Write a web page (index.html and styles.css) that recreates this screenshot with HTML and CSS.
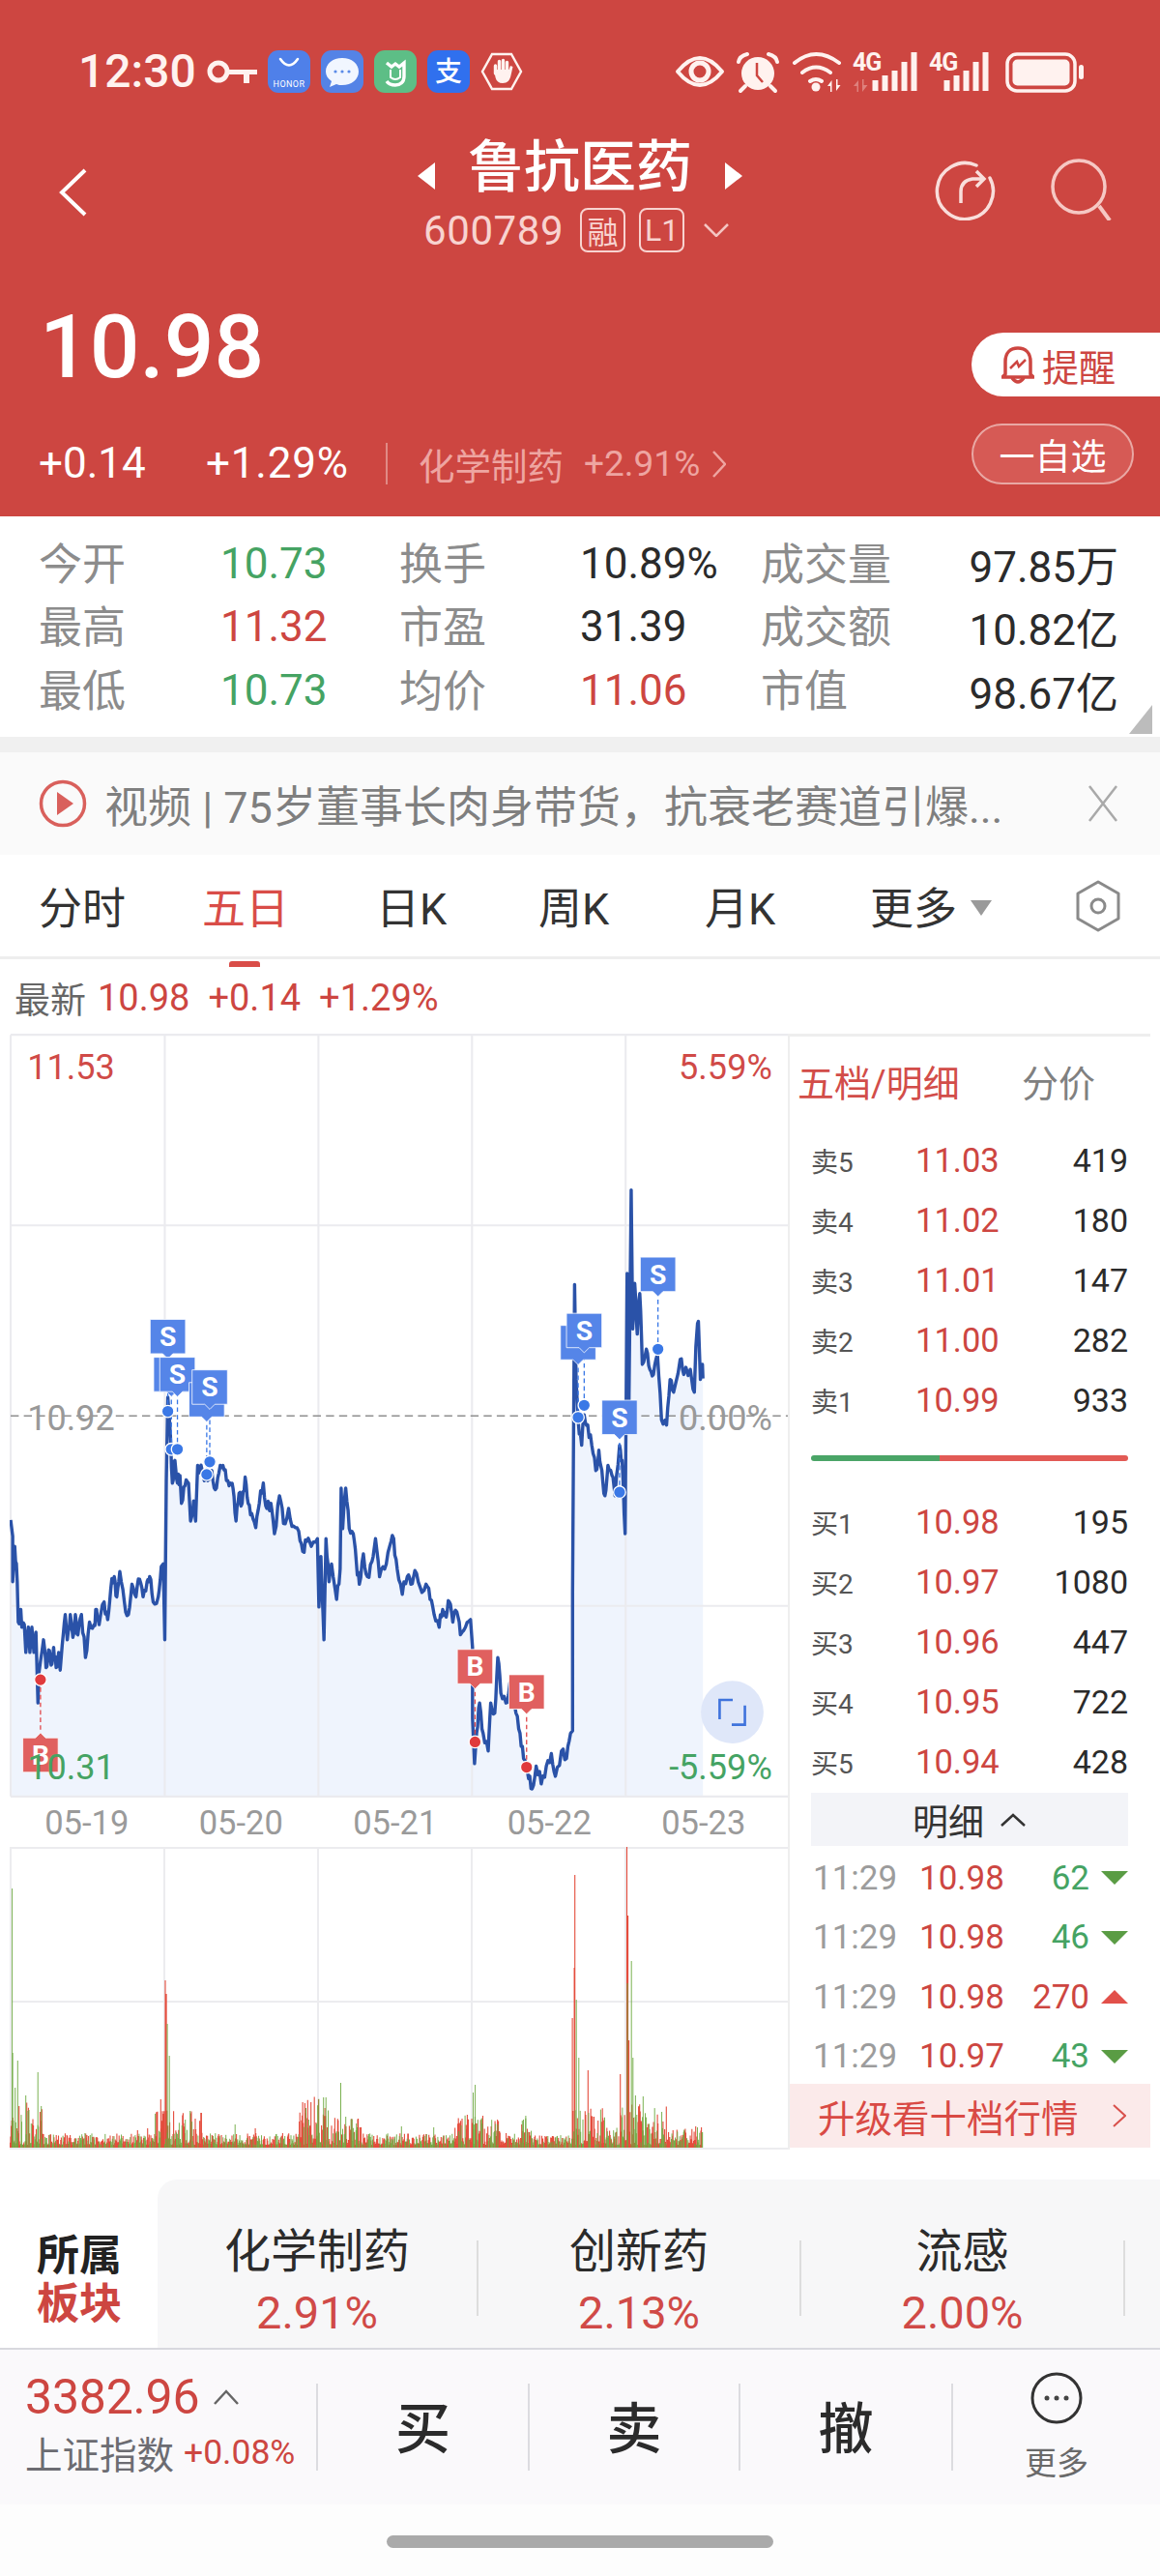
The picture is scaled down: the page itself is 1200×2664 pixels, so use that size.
FILE: index.html
```html
<!DOCTYPE html>
<html lang="zh-CN">
<head>
<meta charset="utf-8">
<title>鲁抗医药</title>
<link rel="stylesheet" href="styles.css">
</head>
<body>
<div class="page">
  <header class="header">
    <div class="status">
      <span class="time">12:30</span>
      <svg class="key" viewBox="0 0 52 26"><circle cx="12" cy="13" r="9" fill="none" stroke="#fff2ef" stroke-width="5"/><path d="M21 11h31v5h-8v9h-6v-9H21z" fill="#fff2ef"/></svg>
      <svg class="app" viewBox="0 0 44 44"><rect width="44" height="44" rx="11" fill="#4f80e9"/><path d="M13 9q9 13 18 0" fill="none" stroke="#fff" stroke-width="2.6" stroke-linecap="round"/><text x="22" y="38" class="honor">HONOR</text></svg>
      <svg class="app" viewBox="0 0 44 44"><rect width="44" height="44" rx="11" fill="#5483e6"/><path d="M22 8c10 0 17 6 17 14s-7 14-17 14c-2 0-4 0-6-1l-7 3 2-6c-4-3-6-6-6-10C5 14 12 8 22 8z" fill="#f1f6ff"/><circle cx="15" cy="22" r="1.6" fill="#5b8be8"/><circle cx="22" cy="22" r="1.6" fill="#5b8be8"/><circle cx="29" cy="22" r="1.6" fill="#5b8be8"/></svg>
      <svg class="app" viewBox="0 0 44 44"><rect width="44" height="44" rx="11" fill="#5dbe86"/><path d="M13 13l5 4 4-3 4 3 5-4v14c0 6-4 9-9 9-4 0-7-1-9-4" fill="none" stroke="#fff" stroke-width="3.4"/><path d="M17 20v8q5 4 10 0v-8" fill="none" stroke="#fff" stroke-width="2"/></svg>
      <svg class="app" viewBox="0 0 44 44"><rect width="44" height="44" rx="11" fill="#3070ee"/><text x="22" y="32" class="ali">支</text></svg>
      <svg class="app" viewBox="0 0 44 44"><path d="M12 4h20l10 18-10 18H12L2 22z" fill="none" stroke="#fff2ef" stroke-width="2.4"/><path d="M15.500 24v-8M19.500 24V11.500M23.500 24V10.500M27.500 24V12.500" fill="none" stroke="#fff2ef" stroke-width="3.400" stroke-linecap="round"/><path d="M14 20h15.500l1.500-4 2.500 1-2 9c-1 5-3.500 8-8.500 8-4 0-6.500-2-7.500-6z" fill="#fff2ef"/></svg>
      <svg class="sys" viewBox="700 50 425 46">
        <path d="M703 73q23-28 46 0q-23 28-46 0z" fill="none" stroke="#fff2ef" stroke-width="4" stroke-linejoin="round"/>
        <circle cx="726" cy="73" r="9" fill="none" stroke="#fff2ef" stroke-width="5"/>
        <circle cx="786" cy="75" r="17" fill="#fff2ef"/>
        <path d="M785 64v13l6 7" fill="none" stroke="#cd4641" stroke-width="2.500"/>
        <path d="M766 63q1-6 9-8M806 63q-1-6-9-8" fill="none" stroke="#fff2ef" stroke-width="4" stroke-linecap="round"/>
        <path d="M773 88l-5 5M799 88l5 5" stroke="#fff2ef" stroke-width="4" stroke-linecap="round"/>
        <path d="M824 64q22-18 46 0M832 74q14-11 29 0M840 83q6-4 12 0" fill="none" stroke="#fff2ef" stroke-width="4" stroke-linecap="round"/>
        <circle cx="846" cy="89" r="4.500" fill="#fff2ef"/>
        <path d="M858 88l4.500-6v12h-1.500v-6zM867 81h1.500v6h3l-4.500 6z" fill="#fff2ef"/>
        <text x="884" y="72" class="net">4G</text>
        <path d="M885 88l5-6v12h-1.500v-6zM894 81h1.500v6h4l-5.500 7z" fill="#fff2ef" opacity=".35"/>
        <path d="M904.500 82h6v11h-6zM914.500 77h6v16h-6zM924.500 72h6v21h-6zM934.500 63h6v30h-6zM944.500 53h6v40h-6z" fill="#fff2ef"/>
        <text x="963" y="72" class="net">4G</text>
        <path d="M978.500 82h6v11h-6zM988.500 77h6v16h-6zM998.500 72h6v21h-6zM1008.500 63h6v30h-6zM1018.500 53h6v40h-6z" fill="#fff2ef"/>
        <rect x="1044" y="55" width="70" height="38" rx="10" fill="none" stroke="#fff2ef" stroke-width="3.500"/>
        <rect x="1049.500" y="60.500" width="59" height="27" rx="5" fill="#fff2ef"/>
        <rect x="1118" y="66" width="5" height="15" rx="2.500" fill="#fff2ef"/>
      </svg>
    </div>
    <div class="nav">
      <svg class="back" viewBox="0 0 32 50"><path d="M28 2L4 25l24 23" fill="none" stroke="#fff" stroke-width="4"/></svg>
      <div class="nav-center">
        <div class="title-row">
          <svg class="arrow" viewBox="0 0 20 28"><path d="M20 0v28L2 14z" fill="#fff"/></svg>
          <h1 class="title">鲁抗医药</h1>
          <svg class="arrow" viewBox="0 0 20 28"><path d="M0 0v28l18-14z" fill="#fff"/></svg>
        </div>
        <div class="sub-row">
          <span class="code">600789</span>
          <span class="tag">融</span>
          <span class="tag">L1</span>
          <svg class="caret" viewBox="0 0 26 14"><path d="M1 1l12 12L25 1" fill="none" stroke="#f4c5c2" stroke-width="2.500"/></svg>
        </div>
      </div>
      <div class="nav-tools">
        <svg class="tool" viewBox="0 0 64 64"><path d="M44 7A29 29 0 1 0 58 20" fill="none" stroke="#f9dedb" stroke-width="3.500" stroke-linecap="round"/><path d="M28 46V34q0-11 12-13h11M44 13l8 8-8 8" fill="none" stroke="#f9dedb" stroke-width="3.500"/></svg>
        <svg class="tool" viewBox="0 0 64 64"><circle cx="30" cy="29" r="27" fill="none" stroke="#f6c8c4" stroke-width="3.500"/><path d="M51 49l11 15" fill="none" stroke="#f6c8c4" stroke-width="4"/></svg>
      </div>
    </div>
    <div class="quote">
      <div class="price">10.98</div>
      <div class="remind">
        <svg class="bell" viewBox="0 0 34 40"><path d="M4 30V17C4 8 9 3 17 3s13 5 13 14v13l3 3H1zM11 34q6 8 12 0" fill="none" stroke="#cd4641" stroke-width="3.500" stroke-linejoin="round"/><path d="M9 24l7-7 2 5 7-7" fill="none" stroke="#cd4641" stroke-width="2.500"/></svg>
        <span>提醒</span>
      </div>
    </div>
    <div class="info">
      <span class="chg chg-a">+0.14</span>
      <span class="chg chg-b">+1.29%</span>
      <span class="sector-link"><b>化学制药</b><i>+2.91%</i><svg class="link-chev" viewBox="0 0 14 28"><path d="M1 1l12 13L1 27" fill="none" stroke="#eea5a1" stroke-width="2.500"/></svg></span>
      <span class="watch">一自选</span>
    </div>
  </header>

  <section class="stats">
    <span class="lbl">今开</span><span class="green">10.73</span><span class="lbl">换手</span><span class="dark">10.89%</span><span class="lbl">成交量</span><span class="dark end">97.85万</span>
    <span class="lbl">最高</span><span class="red">11.32</span><span class="lbl">市盈</span><span class="dark">31.39</span><span class="lbl">成交额</span><span class="dark end">10.82亿</span>
    <span class="lbl">最低</span><span class="green">10.73</span><span class="lbl">均价</span><span class="red">11.06</span><span class="lbl">市值</span><span class="dark end">98.67亿</span>
    <svg class="corner" viewBox="0 0 24 30"><path d="M24 0v30H0z" fill="#bcbcbc"/></svg>
  </section>

  <section class="news">
    <svg class="play" viewBox="0 0 50 50"><circle cx="25" cy="25" r="22.500" fill="none" stroke="#d9605c" stroke-width="3.500"/><path d="M19 13l17 12-17 12z" fill="#d9605c"/></svg>
    <span class="news-text">视频 | 75岁董事长肉身带货，抗衰老赛道引爆...</span>
    <svg class="close" viewBox="0 0 32 38"><path d="M2 1l28 36M30 1L2 37" fill="none" stroke="#a9a9a9" stroke-width="2.500"/></svg>
  </section>

  <nav class="tabs">
    <span class="tab">分时</span>
    <span class="tab active">五日</span>
    <span class="tab">日K</span>
    <span class="tab">周K</span>
    <span class="tab">月K</span>
    <span class="tab more">更多<svg class="more-tri" viewBox="0 0 22 16"><path d="M0 0h22L11 16z" fill="#9a9a9a"/></svg></span>
    <svg class="hex" viewBox="0 0 46 54"><path d="M23 2l21 12v26L23 52 2 40V14z" fill="none" stroke="#8a8a8a" stroke-width="3" stroke-linejoin="round"/><circle cx="23" cy="27" r="7" fill="none" stroke="#8a8a8a" stroke-width="3"/></svg>
  </nav>

  <div class="latest"><span class="latest-lbl">最新</span><span>10.98</span><span>+0.14</span><span>+1.29%</span></div>

  <section class="market">
    <div class="charts">
      <svg class="price-chart" viewBox="18 16 1540 1511">
        <rect x="20" y="18" width="1538" height="1507" fill="#fff"/>
        <polygon id="area" fill="#eff4fd"/>
        <g class="grid">
          <path d="M20 18H1558M20 395H1558M20 1148H1558M20 1525H1558M20 18V1525M325 18V1525M629 18V1525M933 18V1525M1237 18V1525"/>
        </g>
        <path class="mid" d="M20 772H1558"/>
        <polyline id="line" class="pline"/>

        <g class="mk-line blue"><path d="M331 665V763M338 740V838M350 740V838M408 790V888M414 765V863M1143 677V775M1155 653V751M1225 825V923M1301 542V640"/></g>
        <g class="mk-line redl"><path d="M79 1294V1400M939 1318V1417M1041 1368V1467"/></g>

        <g class="mk s" transform="translate(331 615)"><path d="M-35-34H35V34H10L0 44-10 34H-35z"/><text y="19">S</text></g>
        <g class="mk s" transform="translate(338 690)"><path d="M-35-34H35V34H10L0 44-10 34H-35z"/></g>
        <g class="mk s" transform="translate(350 690)"><path d="M-35-34H35V34H10L0 44-10 34H-35z"/><text y="19">S</text></g>
        <g class="mk s" transform="translate(408 740)"><path d="M-35-34H35V34H10L0 44-10 34H-35z"/></g>
        <g class="mk s" transform="translate(414 715)"><path d="M-35-34H35V34H10L0 44-10 34H-35z"/><text y="19">S</text></g>
        <g class="mk s" transform="translate(1143 627)"><path d="M-35-34H35V34H10L0 44-10 34H-35z"/></g>
        <g class="mk s" transform="translate(1155 603)"><path d="M-35-34H35V34H10L0 44-10 34H-35z"/><text y="19">S</text></g>
        <g class="mk s" transform="translate(1225 775)"><path d="M-35-34H35V34H10L0 44-10 34H-35z"/><text y="19">S</text></g>
        <g class="mk s" transform="translate(1301 492)"><path d="M-35-34H35V34H10L0 44-10 34H-35z"/><text y="19">S</text></g>
        <g class="mk b" transform="translate(79 1443)"><path d="M-35-34H-10L0-44 10-34H35V34H-35z"/><text y="19">B</text></g>
        <g class="mk b" transform="translate(939 1268)"><path d="M-35-34H35V34H10L0 44-10 34H-35z"/><text y="19">B</text></g>
        <g class="mk b" transform="translate(1041 1318)"><path d="M-35-34H35V34H10L0 44-10 34H-35z"/><text y="19">B</text></g>

        <g class="dot blue-dot"><circle cx="331" cy="763" r="12"/><circle cx="338" cy="838" r="12"/><circle cx="350" cy="838" r="12"/><circle cx="408" cy="888" r="12"/><circle cx="414" cy="863" r="12"/><circle cx="1143" cy="775" r="12"/><circle cx="1155" cy="751" r="12"/><circle cx="1225" cy="923" r="12"/><circle cx="1301" cy="640" r="12"/></g>
        <g class="dot red-dot"><circle cx="79" cy="1294" r="12"/><circle cx="939" cy="1417" r="12"/><circle cx="1041" cy="1467" r="12"/></g>

        <text x="53" y="106" class="axis a-red">11.53</text>
        <text x="1527" y="106" class="axis a-red a-end">5.59%</text>
        <text x="53" y="800" class="axis a-gray">10.92</text>
        <text x="1527" y="800" class="axis a-gray a-end">0.00%</text>
        <text x="53" y="1490" class="axis a-green">10.31</text>
        <text x="1527" y="1490" class="axis a-green a-end">-5.59%</text>

        <circle cx="1448" cy="1358" r="62" fill="#dfe7f9"/>
        <path d="M1423 1372v-38h26M1473 1345v38h-26" fill="none" stroke="#3f73dc" stroke-width="5"/>
      </svg>
      <div class="dates"><span>05-19</span><span>05-20</span><span>05-21</span><span>05-22</span><span>05-23</span></div>
      <svg class="vol-chart" viewBox="0 0 805 313">
        <path class="vgrid" d="M0 1H805M0 160H805M0 312H805M1 0V313M160 0V313M319 0V313M478 0V313M637 0V313"/>
        <path id="volR" class="vol-r"/>
        <path id="volG" class="vol-g"/>
      </svg>
    </div>
    <aside class="panel">
      <div class="panel-tabs"><span class="ptab-on">五档/明细</span><span class="ptab">分价</span></div>
      <div class="q-row"><span class="q-l">卖5</span><span class="q-p">11.03</span><span class="q-v">419</span></div>
      <div class="q-row"><span class="q-l">卖4</span><span class="q-p">11.02</span><span class="q-v">180</span></div>
      <div class="q-row"><span class="q-l">卖3</span><span class="q-p">11.01</span><span class="q-v">147</span></div>
      <div class="q-row"><span class="q-l">卖2</span><span class="q-p">11.00</span><span class="q-v">282</span></div>
      <div class="q-row"><span class="q-l">卖1</span><span class="q-p">10.99</span><span class="q-v">933</span></div>
      <div class="ratio"><i class="ratio-g"></i><i class="ratio-r"></i></div>
      <div class="q-row"><span class="q-l">买1</span><span class="q-p">10.98</span><span class="q-v">195</span></div>
      <div class="q-row"><span class="q-l">买2</span><span class="q-p">10.97</span><span class="q-v">1080</span></div>
      <div class="q-row"><span class="q-l">买3</span><span class="q-p">10.96</span><span class="q-v">447</span></div>
      <div class="q-row"><span class="q-l">买4</span><span class="q-p">10.95</span><span class="q-v">722</span></div>
      <div class="q-row"><span class="q-l">买5</span><span class="q-p">10.94</span><span class="q-v">428</span></div>
      <div class="detail-head"><span>明细</span><svg class="up-chev" viewBox="0 0 26 14"><path d="M1 13L13 2l12 11" fill="none" stroke="#333" stroke-width="2.500"/></svg></div>
      <div class="d-row"><span class="d-t">11:29</span><span class="d-p">10.98</span><span class="d-v dv-g">62</span><svg class="d-tri" viewBox="0 0 28 14"><path d="M0 0h28L14 14z" fill="#5a9c44"/></svg></div>
      <div class="d-row"><span class="d-t">11:29</span><span class="d-p">10.98</span><span class="d-v dv-g">46</span><svg class="d-tri" viewBox="0 0 28 14"><path d="M0 0h28L14 14z" fill="#5a9c44"/></svg></div>
      <div class="d-row"><span class="d-t">11:29</span><span class="d-p">10.98</span><span class="d-v dv-r">270</span><svg class="d-tri" viewBox="0 0 28 14"><path d="M0 14h28L14 0z" fill="#e2504a"/></svg></div>
      <div class="d-row"><span class="d-t">11:29</span><span class="d-p">10.97</span><span class="d-v dv-g">43</span><svg class="d-tri" viewBox="0 0 28 14"><path d="M0 0h28L14 14z" fill="#5a9c44"/></svg></div>
      <div class="upgrade"><span>升级看十档行情</span><svg class="up-arrow" viewBox="0 0 14 24"><path d="M1 1l12 11L1 23" fill="none" stroke="#d9504b" stroke-width="2"/></svg></div>
    </aside>
  </section>

  <section class="sectors">
    <div class="sector-head"><span class="sh-a">所属</span><span class="sh-b">板块</span></div>
    <div class="sector-list">
      <div class="cell"><span class="c-name">化学制药</span><span class="c-val">2.91%</span></div>
      <div class="cell"><span class="c-name">创新药</span><span class="c-val">2.13%</span></div>
      <div class="cell"><span class="c-name">流感</span><span class="c-val">2.00%</span></div>
    </div>
  </section>

  <footer class="footer">
    <div class="bar">
      <div class="index">
        <div class="idx-top"><span class="idx-num">3382.96</span><svg class="idx-chev" viewBox="0 0 26 16"><path d="M1 15L13 2l12 13" fill="none" stroke="#666" stroke-width="2.500"/></svg></div>
        <div class="idx-bot"><span class="idx-name">上证指数</span><span class="idx-pct">+0.08%</span></div>
      </div>
      <div class="act">买</div>
      <div class="act">卖</div>
      <div class="act">撤</div>
      <div class="act act-more">
        <svg class="more-ic" viewBox="0 0 54 54"><circle cx="27" cy="27" r="25" fill="none" stroke="#333" stroke-width="3"/><circle cx="17" cy="27" r="2.500" fill="#444"/><circle cx="27" cy="27" r="2.500" fill="#444"/><circle cx="37" cy="27" r="2.500" fill="#444"/></svg>
        <span>更多</span>
      </div>
    </div>
    <div class="home"><i class="home-bar"></i></div>
  </footer>
</div>
<script src="chart.js"></script>
</body>
</html>
```

FILE: styles.css
```css
* { box-sizing: border-box; }
html, body { margin: 0; padding: 0; background: #fff; }
body { font-family: Roboto, "Noto Sans CJK SC", sans-serif; color: #2b2b2b; }
.page { width: 1200px; height: 2664px; overflow: hidden; display: flex; flex-direction: column; }
svg { display: block; flex: none; }

/* header */
.header { height: 534px; background: #cd4641; color: #fff; flex: none; }
.status { height: 146px; display: flex; align-items: center; padding: 1px 0 0 81px; }
.time { font-size: 48px; font-weight: 500; color: #fff2ef; width: 133px; }
.key { width: 52px; height: 26px; margin-right: 11px; }
.app { width: 44px; height: 44px; margin-right: 11px; }
.honor { font-size: 9px; fill: #fff; text-anchor: middle; font-family: Roboto, sans-serif; letter-spacing: .4px; }
.ali { font-size: 28px; fill: #fff; text-anchor: middle; font-family: "Noto Sans CJK SC", sans-serif; font-weight: 500; }
.sys { width: 425px; height: 46px; margin-left: 146px; }
.net { font-size: 25px; font-weight: 700; fill: #fff2ef; font-family: Roboto, sans-serif; letter-spacing: -1px; }

.nav { height: 116px; display: grid; grid-template-columns: 1fr 400px 1fr; }
.back { width: 32px; height: 50px; margin: 28px 0 0 60px; }
.nav-center { display: flex; flex-direction: column; align-items: center; }
.title-row { height: 54px; display: flex; align-items: center; gap: 34px; }
.title { margin: 0; font-size: 58px; font-weight: 500; line-height: 54px; }
.arrow { width: 20px; height: 28px; margin-top: 18px; }
.sub-row { margin-top: 14px; height: 48px; display: flex; align-items: center; margin-left: -8px; color: #f8d3d0; }
.code { font-size: 42px; width: 162px; letter-spacing: .6px; }
.tag { width: 47px; height: 46px; border: 2px solid #f8d3d0; border-radius: 8px; font-size: 32px; display: flex; align-items: center; justify-content: center; margin-right: 14px; }
.caret { width: 26px; height: 14px; margin-left: 6px; }
.nav-tools { display: flex; justify-content: flex-end; gap: 56px; padding: 18px 50px 0 0; }
.tool { width: 64px; height: 64px; }

.quote { height: 158px; display: flex; justify-content: space-between; align-items: flex-start; padding: 52px 0 0 41px; }
.price { font-size: 91px; line-height: 90px; font-weight: 500; }
.remind { width: 195px; height: 66px; margin-top: 30px; background: #fff; border-radius: 33px 0 0 33px; color: #cd4641; display: flex; align-items: center; padding-left: 31px; gap: 8px; font-size: 38px; }
.bell { width: 34px; height: 40px; }

.info { height: 114px; display: flex; align-items: flex-start; padding: 38px 27px 0 40px; }
.chg { font-size: 44px; line-height: 43px; }
.chg-a { width: 173px; }
.chg-b { width: 186px; letter-spacing: .8px; }
.sector-link { height: 43px; border-left: 2px solid #e08a85; padding-left: 32px; display: flex; align-items: center; flex: 1; color: #eea5a1; }
.sector-link b { font-weight: 400; font-size: 37.500px; margin-right: 21px; }
.sector-link i { font-style: normal; font-size: 37px; width: 133px; }
.link-chev { width: 14px; height: 28px; }
.watch { width: 168px; height: 63px; margin-top: -20px; border: 2px solid #e9a8a4; border-radius: 32px; background: #d65a55; font-size: 37px; display: flex; align-items: center; justify-content: center; }

/* stats */
.stats { height: 228px; flex: none; padding: 16px 43px 0 40px; display: grid; grid-template-columns: 188px 185px 187px 187px 1fr 1fr; grid-auto-rows: 65.500px; align-items: center; font-size: 44px; position: relative; }
.lbl { color: #8c8c8c; font-size: 45px; padding-bottom: 5px; }
.green { color: #45a363; }
.red { color: #cd4641; }
.dark { color: #2b2b2b; }
.end { text-align: right; }
.corner { position: absolute; right: 8px; bottom: 3px; width: 24px; height: 30px; }

.news { height: 122px; flex: none; background: #fafafa; border-top: 16px solid #f0f0f0; display: flex; align-items: center; padding-left: 40px; }
.play { width: 50px; height: 50px; margin-right: 18px; }
.news-text { width: 1017px; font-size: 45px; color: #7f7f7f; white-space: nowrap; overflow: hidden; }
.close { width: 32px; height: 38px; }

.tabs { height: 108px; flex: none; border-bottom: 3px solid #eee; background: #fff; display: grid; grid-template-columns: 169px 180px 168px 172px 171px 213px auto; align-items: center; padding-left: 40px; font-size: 45px; color: #333; }
.tab { position: relative; white-space: nowrap; display: flex; align-items: center; }
.active { color: #d94d48; }
.active::after { content: ""; position: absolute; left: 28px; bottom: -31px; width: 32px; height: 6px; border-radius: 3px 3px 0 0; background: #d94d48; }
.more-tri { width: 22px; height: 16px; margin: 4px 0 0 14px; }
.hex { width: 46px; height: 54px; }

.latest { height: 77px; flex: none; display: flex; align-items: center; padding: 2px 0 0 15px; font-size: 38px; color: #cd4641; gap: 19px; }
.latest-lbl { color: #666; font-size: 37px; margin-right: -7px; }

/* market */
.market { height: 1154px; flex: none; margin: 0 10px; display: flex; }
.charts { width: 805px; flex: none; display: flex; flex-direction: column; }
.price-chart { width: 805px; height: 790px; }
.grid path { fill: none; stroke: #ebebef; stroke-width: 4; }
.mid { stroke: #8f8f8f; stroke-width: 2.500; stroke-dasharray: 16 10; fill: none; }
.pline { fill: none; stroke: #2a52a8; stroke-width: 6.500; stroke-linejoin: round; }
.mk-line path { fill: none; stroke-width: 2.500; stroke-dasharray: 9 6; }
.blue path { stroke: #3a78e6; }
.redl path { stroke: #e0474a; }
.mk path { stroke: #fff; stroke-width: 1.500; }
.s path { fill: #5585e8; }
.b path { fill: #e0605f; }
.mk text { font-size: 54px; font-weight: 700; fill: #fff; text-anchor: middle; font-family: Roboto, sans-serif; }
.dot circle { stroke: #fff; stroke-width: 2.500; }
.blue-dot circle { fill: #3a78e6; }
.red-dot circle { fill: #e03a3c; }
.axis { font-size: 69px; font-family: Roboto, sans-serif; }
.a-end { text-anchor: end; }
.a-red { fill: #d04a47; }
.a-gray { fill: #999; }
.a-green { fill: #45a363; }

.dates { height: 51px; flex: none; display: grid; grid-template-columns: repeat(5, 159.500px); justify-items: center; align-items: center; font-size: 34.500px; color: #9a9a9a; padding: 0 3px 0 0; }
.vol-chart { width: 805px; height: 313px; }
.vgrid { fill: none; stroke: #ececef; stroke-width: 2; }
.vol-r { fill: none; stroke: #e44c3c; stroke-width: 1.100; }
.vol-g { fill: none; stroke: #6ba83e; stroke-width: 1; opacity: .9; }

.panel { width: 375px; flex: none; border-top: 3px solid #eee; border-left: 2px solid #eee; position: relative; display: flex; flex-direction: column; padding: 0 23px 0 22px; height: 1154px; }
.panel-tabs { height: 97px; flex: none; display: flex; align-items: center; padding-bottom: 6px; font-size: 38px; margin-left: -14px; }
.ptab-on { color: #d24d49; width: 232px; }
.ptab { color: #808080; }
.q-row { height: 62px; flex: none; display: grid; grid-template-columns: 108px 1fr auto; align-items: center; }
.q-l { font-size: 28px; color: #555; }
.q-p { font-size: 34.500px; color: #cd4641; }
.q-v { font-size: 34px; color: #2b2b2b; }
.ratio { height: 6px; flex: none; margin: 26px 0 32px; display: flex; border-radius: 3px; overflow: hidden; }
.ratio-g { width: 133px; background: #4aa567; }
.ratio-r { flex: 1; background: #e25a55; }
.detail-head { height: 55px; flex: none; margin-top: 1px; background: #f3f4f8; display: flex; align-items: center; justify-content: center; gap: 17px; font-size: 37px; color: #333; padding-right: 1px; }
.up-chev { width: 26px; height: 14px; }
.d-row { height: 61.500px; flex: none; display: grid; grid-template-columns: 110px 1fr auto 40px; align-items: center; font-size: 35px; padding: 5px 0 0 2px; }
.d-t { color: #9c9c9c; }
.d-p { color: #cd4641; }
.dv-g { color: #45a363; }
.dv-r { color: #cd4641; }
.d-tri { width: 28px; height: 14px; justify-self: end; }
.upgrade { height: 66px; flex: none; margin: 0 -23px 0 -22px; background: #fbeaea; display: flex; align-items: center; justify-content: space-between; padding: 0 25px 0 29px; font-size: 38.500px; color: #d94a45; }
.up-arrow { width: 14px; height: 24px; }

/* sectors */
.sectors { height: 205px; flex: none; padding-top: 31px; display: flex; }
.sector-head { width: 163px; flex: none; padding: 54px 0 0 38px; display: flex; flex-direction: column; font-size: 44px; line-height: 50px; font-weight: 700; }
.sh-a { color: #222; }
.sh-b { color: #cd4641; }
.sector-list { flex: 1; background: #f7f7f8; border-radius: 20px 0 0 0; display: grid; grid-template-columns: 332px 334px 335px; align-items: start; }
.cell { height: 78px; margin-top: 63px; border-right: 2px solid #ddd; position: relative; display: flex; flex-direction: column; align-items: center; justify-content: center; gap: 12px; }
.c-name { font-size: 48px; line-height: 52px; margin-top: 7px; color: #2b2b2b; }
.c-val { font-size: 47px; line-height: 50px; color: #d04a47; }

/* footer */
.footer { flex: 1; border-top: 2px solid #d8d8de; background: #fdfdfd; display: flex; flex-direction: column; }
.bar { height: 160px; flex: none; background: #faf9fb; display: grid; grid-template-columns: 327px 219px 218px 220px 216px; align-items: start; }
.index { padding: 23px 0 0 26px; }
.idx-top { height: 52px; display: flex; align-items: center; }
.idx-num { font-size: 50px; color: #cd4641; width: 195px; letter-spacing: -.2px; }
.idx-chev { width: 26px; height: 16px; }
.idx-bot { margin-top: 11px; height: 40px; display: flex; align-items: center; gap: 10px; }
.idx-name { font-size: 38.500px; color: #6c6c72; }
.idx-pct { font-size: 35.500px; color: #cd4641; }
.act { margin-top: 35px; height: 90px; border-left: 2px solid #dcdce0; display: flex; align-items: center; justify-content: center; padding-bottom: 6px; font-size: 57px; font-weight: 500; color: #2b2b2b; }
.act-more { flex-direction: column; font-size: 33px; font-weight: 400; color: #6a6a6a; gap: 14px; padding: 2px 0 0 0; }
.more-ic { width: 54px; height: 54px; }
.home { flex: 1; display: flex; justify-content: center; padding-top: 32px; }
.home-bar { width: 400px; height: 13px; border-radius: 7px; background: #aaa; }
```

FILE: chart.js
```js
(function () {
  var seed = 97531;
  function rnd() {
    seed = (seed * 16807) % 2147483647;
    return seed / 2147483647;
  }

  // Price trace, in the chart's own coordinates.
  var raw = [20,978,24,1010,24,1100,28,1030,33,1100,35,1180,40,1155,42,1190,47,1185,50,1240,55,1190,58,1240,62,1190,66,1240,70,1200,74,1340,76,1280,85,1215,90,1270,95,1235,100,1265,105,1230,110,1270,115,1240,118,1275,122,1225,128,1165,132,1215,138,1165,143,1210,148,1165,153,1205,160,1165,168,1250,176,1180,185,1185,190,1155,195,1185,205,1140,212,1175,218,1115,225,1090,230,1130,236,1080,245,1140,253,1165,260,1105,268,1130,275,1095,282,1130,290,1100,295,1090,302,1140,312,1130,318,1070,322,1065,325,1215,328,900,331,735,335,790,340,905,345,860,350,905,355,890,358,945,365,910,372,905,376,980,382,940,386,980,390,870,400,885,410,900,418,880,425,918,432,885,440,870,447,900,455,905,460,915,466,980,472,925,478,945,484,893,490,945,497,965,505,993,512,945,520,905,527,955,535,945,542,1005,552,930,560,985,570,955,580,990,590,1000,598,1040,606,1020,615,1030,627,1015,630,1150,634,1050,640,1215,644,1015,650,1100,655,1065,665,1135,672,1075,674,915,677,995,683,915,690,995,698,1005,704,1060,710,1105,718,1045,726,1090,735,1060,742,1015,750,1090,760,1075,770,1030,778,1015,785,1075,795,1125,805,1090,812,1105,820,1078,830,1110,842,1105,850,1135,858,1165,868,1190,875,1155,882,1170,888,1140,895,1180,903,1160,910,1205,920,1190,930,1175,934,1230,934,1370,938,1460,942,1400,948,1340,955,1400,965,1435,970,1340,978,1360,984,1250,990,1320,1000,1340,1008,1300,1020,1360,1028,1400,1035,1450,1045,1490,1052,1510,1060,1465,1070,1500,1080,1465,1090,1440,1098,1485,1110,1435,1120,1450,1128,1400,1132,1395,1132,1120,1134,800,1136,512,1139,700,1143,780,1150,830,1155,770,1162,790,1170,830,1178,880,1184,840,1190,880,1196,930,1202,870,1210,890,1216,930,1225,830,1230,860,1236,1005,1240,490,1243,800,1248,325,1251,600,1255,510,1260,610,1265,530,1270,670,1278,640,1285,680,1292,690,1300,650,1308,780,1318,790,1325,700,1332,725,1345,660,1352,690,1365,680,1373,725,1376,635,1381,585,1385,700,1389,670,1390,698];

  var pts = [];
  for (var i = 0; i < raw.length; i += 2) {
    var x = raw[i], y = raw[i + 1];
    if (i > 0 && x - raw[i - 2] > 4) {
      var px0 = raw[i - 2], py0 = raw[i - 1], steps = 3;
      for (var k = 1; k < steps; k++) {
        var f = k / steps;
        var jy = py0 + (y - py0) * f + (rnd() - 0.5) * 26;
        pts.push((px0 + (x - px0) * f).toFixed(1) + ',' + Math.min(jy, 1512).toFixed(1));
      }
    }
    pts.push(x + ',' + y);
  }
  var joined = pts.join(' ');
  document.getElementById('line').setAttribute('points', joined);
  document.getElementById('area').setAttribute('points', joined + ' 1390,1525 20,1525');

  // Volume bars. Clusters: [from, to, height]; spikes: [x, height, red?].
  var BASE = 311;
  var clusters = [[20,85,44],[85,300,12],[300,400,38],[400,590,12],[590,650,50],[650,715,28],[715,900,12],[900,990,32],[990,1030,12],[1030,1055,30],[1055,1130,10],[1130,1200,38],[1200,1225,18],[1225,1320,42],[1320,1390,18]];
  var spikes = [[24,268,0],[25,98,0],[35,90,0],[75,78,0],[30,62,0],[51,54,0],[318,50,1],[327,173,1],[329,159,1],[331,128,0],[335,95,0],[376,38,0],[630,50,1],[640,52,0],[674,67,0],[684,32,0],[936,57,0],[940,65,0],[914,30,1],[984,29,1],[1040,33,0],[1132,134,1],[1136,186,1],[1137,282,1],[1140,153,0],[1145,93,0],[1163,80,1],[1183,28,1],[1227,76,1],[1240,312,1],[1242,240,1],[1241,170,0],[1244,111,1],[1249,193,0],[1252,93,0],[1257,54,0],[1272,53,0],[1309,37,0],[1376,22,1],[465,24,0],[794,22,0],[858,21,0],[168,15,0],[272,18,1],[292,20,1],[505,20,1],[705,25,0]];

  function clusterHeight(zx) {
    for (var c = 0; c < clusters.length; c++) {
      if (zx >= clusters[c][0] && zx < clusters[c][1]) return clusters[c][2];
    }
    return 8;
  }
  function px(zx) { return (zx / 1.912 - 10).toFixed(1); }

  var red = '', green = '';
  for (var zx = 20; zx < 1390; zx += 1.1) {
    var h = 3 + clusterHeight(zx) * Math.pow(rnd(), 1.8);
    var seg = 'M' + px(zx) + ' ' + BASE + 'V' + (BASE - h).toFixed(1);
    if (rnd() < 0.62) red += seg; else green += seg;
  }
  spikes.forEach(function (s) {
    var seg = 'M' + px(s[0]) + ' ' + BASE + 'V' + (BASE - s[1]).toFixed(1);
    if (s[2]) red += seg; else green += seg;
  });
  document.getElementById('volR').setAttribute('d', red);
  document.getElementById('volG').setAttribute('d', green);
})();
```
